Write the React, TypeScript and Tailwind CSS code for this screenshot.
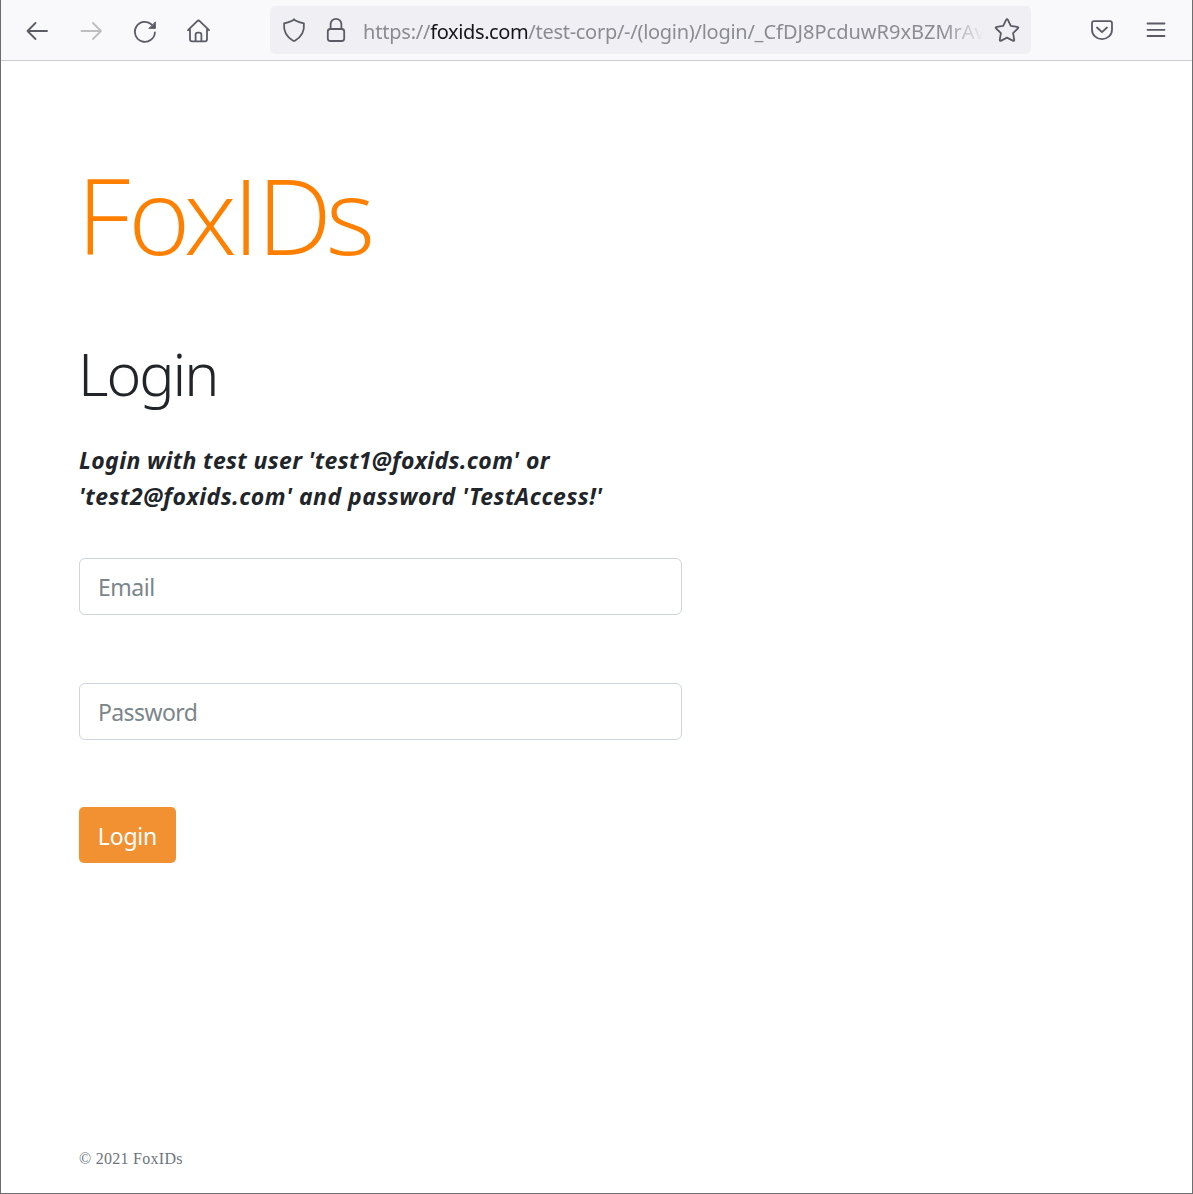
import React from 'react';

const icon = 'shrink-0 overflow-visible';
const stroke = {
  fill: 'none',
  stroke: 'currentColor',
  strokeWidth: 1.8,
  strokeLinecap: 'round' as const,
  strokeLinejoin: 'round' as const,
};

function Toolbar() {
  return (
    <header className="flex h-[61px] shrink-0 items-start border-b border-[#cccccc] bg-[#f9f9fb] text-[#5b5b66]">
      <div className="flex w-[269px] gap-[30px] pl-6 pt-[19px]">
        <svg className={icon} width="24" height="24" {...stroke}>
          <path d="M22 12H2.5M10.5 4 2.5 12l8 8" />
        </svg>
        <svg className={`${icon} text-[#bdbdc2]`} width="24" height="24" {...stroke}>
          <path d="M2.5 12H22M14 4l8 8-8 8" />
        </svg>
        <svg className={icon} width="24" height="24" {...stroke}>
          <path d="M21.9 13.5A10 10 0 1 1 18.8 5.6" />
          <path d="M22.4 3.2v6.2h-6.2z" fill="currentColor" strokeWidth="0.9" />
        </svg>
        <svg className={icon} width="24" height="24" {...stroke}>
          <path d="M1 11.2 10 2.3Q11.5.8 13 2.3l9 8.9M3 10v10.3Q3 22.4 5.1 22.4h12.8q2.1 0 2.1-2.1V10M8.6 22v-6.2q0-2.2 2.2-2.2h1.4q2.2 0 2.2 2.2V22" />
        </svg>
      </div>
      <div className="mt-[6px] flex h-12 w-[761px] items-center rounded-[5px] bg-[#f0f0f4] pl-3">
        <svg className={icon} width="24" height="24" {...stroke}>
          <path d="M12 1.2q1.3 2 9.9 4.2Q23 17 12.9 22.7q-.9.5-1.8 0Q1 17 2.1 5.4 10.7 3.2 12 1.2z" />
        </svg>
        <svg className={`${icon} ml-[18px]`} width="24" height="24" {...stroke}>
          <path d="M6.6 11V6.3a5.4 5.4 0 0 1 10.8 0V11" />
          <rect x="3.8" y="11" width="16.4" height="12" rx="2.5" />
        </svg>
        <div className="ml-[15px] h-12 w-[624px] overflow-hidden whitespace-nowrap pt-[2px] font-['Noto_Sans'] text-[20px] leading-[48px] tracking-[-0.2px] text-[#8b8b92] [mask-image:linear-gradient(to_right,black_580px,transparent_621px)]">
          https://<span className="tracking-[-0.4px] text-[#15141a]">foxids.com</span>
          <span className="tracking-[-0.28px]">/test-corp/-/(login)/login/</span>
          <span className="tracking-[0px]">_CfDJ8PcduwR9xBZMrAv</span>
        </div>
        <svg className={`${icon} ml-2`} width="24" height="24" {...stroke}>
          <path d="M11.1 1.9q.9-1.7 1.8 0l2.9 6 6.4.9q1.9.3.6 1.7l-4.7 4.6 1.1 6.5q.3 1.9-1.4 1l-5.8-3-5.8 3q-1.7.9-1.4-1l1.1-6.5-4.7-4.6q-1.3-1.4.6-1.7l6.4-.9z" />
        </svg>
      </div>
      <svg className={`${icon} ml-[59px] mt-[18px]`} width="24" height="24" {...stroke}>
        <path d="M4 3.2h16q2 0 2 2v6.6a10 9.4 0 0 1-20 0V5.2q0-2 2-2z" />
        <path d="m7 9.5 5 4.7 5-4.7" />
      </svg>
      <svg className={`${icon} ml-[30px] mt-[18px]`} width="24" height="24" {...stroke}>
        <path d="M3.5 5.5h17M3.5 11.8h17M3.5 18h17" />
      </svg>
    </header>
  );
}

export default function App() {
  return (
    <div className="flex h-[1194px] w-[1193px] flex-col border-x border-b border-[#6d6d70] bg-white font-['Noto_Sans',sans-serif]">
      <Toolbar />
      <main className="flex-1 pl-[78px] text-[#212529]">
        <div className="-ml-[2px] mt-[81px] h-[144px] whitespace-nowrap font-['Open_Sans'] text-[106px] font-light leading-[144px] text-[#ff8000]">
          <span className="tracking-[-2px]">F</span>
          <span className="tracking-[-6.5px]">o</span>
          <span className="tracking-[-4px]">x</span>
          <span className="tracking-[-2.5px]">I</span>
          <span className="tracking-[-6px]">D</span>
          <span>s</span>
        </div>
        <h1 className="-ml-px mt-[47px] h-[80px] text-[59px] font-light leading-[80px] tracking-[-2px]">Login</h1>
        <p className="mt-[29px] whitespace-nowrap text-[23px] font-bold italic leading-[36px] tracking-[0.36px]">
          Login with test user 'test1@foxids.com' or
          <br />
          <span className="tracking-[0.5px]">'test2@foxids.com' and password 'TestAccess!'</span>
        </p>
        <form className="mt-[44px] flex flex-col items-start" onSubmit={(e) => e.preventDefault()}>
          <input
            placeholder="Email"
            className="h-[57px] w-[603px] rounded-[6px] border border-[#ced4da] px-[18px] pt-px text-[23px] tracking-[-0.5px] placeholder:text-[#7b868a]"
          />
          <input
            type="password"
            placeholder="Password"
            className="mt-[68px] h-[57px] w-[603px] rounded-[6px] border border-[#ced4da] px-[18px] pt-px text-[23px] tracking-[-0.6px] placeholder:text-[#7b868a]"
          />
          <button className="mt-[67px] h-[56px] w-[97px] rounded-[5px] bg-[#f29132] pt-[3px] text-[23px] tracking-[-0.2px] text-white">Login</button>
        </form>
      </main>
      <footer className="h-[46px] pl-[78px] font-['Liberation_Serif'] text-[16px] leading-[24px] tracking-[0.28px] text-[#6c757d]">© 2021 FoxIDs</footer>
    </div>
  );
}
